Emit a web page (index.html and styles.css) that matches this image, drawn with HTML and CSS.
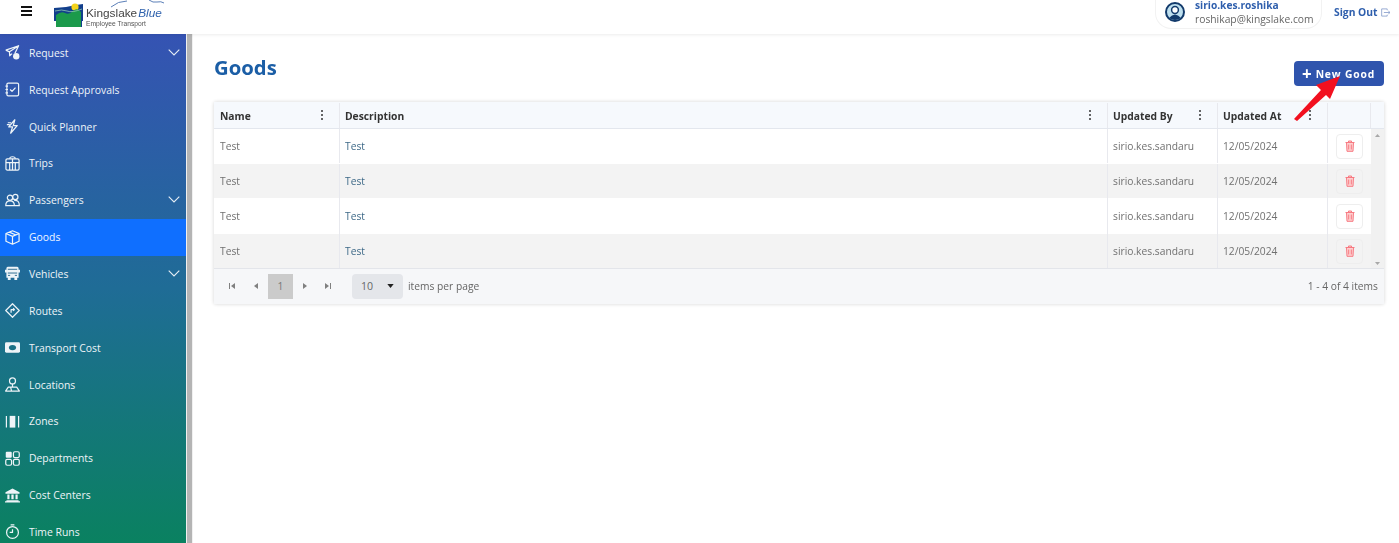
FILE: index.html
```html
<!DOCTYPE html>
<html lang="en">
<head>
<meta charset="utf-8">
<title>Goods</title>
<link rel="stylesheet" href="styles.css">
</head>
<body>
<header class="topbar">
  <div class="hamburger"><span></span><span></span><span></span></div>
  <div class="logo">
    <svg class="logo-mark" width="29" height="24" viewBox="0 0 29 24">
      <path d="M0 5 L12 4 L22 2 L29 1 V18 H28 V24 H2 V18 H0 Z" fill="#123f8c"/>
      <circle cx="21" cy="4" r="3.6" fill="#f4d31c"/>
      <path d="M2 12 Q7 8 11 10 T19 8 T27 9 V24 H2 Z" fill="#1b9a4b"/>
      <path d="M1 8 Q8 6 13 8 T28 6" stroke="#8fc7b5" stroke-width=".8" fill="none"/>
    </svg>
    <div class="logo-text">
      <div class="logo-name">Kingslake<em>Blue</em></div>
      <div class="logo-sub">Employee Transport</div>
    </div>
    <svg class="logo-wave" width="55" height="8" viewBox="0 0 55 8"><path d="M1 7 Q8 1 17 1 M39 0 Q43 3 47 2 T54 3" stroke="#5c80b8" stroke-width="1" fill="none"/></svg>
  </div>
  <div class="spacer"></div>
  <div class="user-pill">
    <svg class="avatar" width="20" height="20" viewBox="0 0 20 20">
      <circle cx="10" cy="10" r="9" fill="#bfe0ef" stroke="#123a6b" stroke-width="2"/>
      <circle cx="10" cy="8" r="3.4" fill="#fff" stroke="#123a6b" stroke-width="1.5"/>
      <path d="M4 16 Q10 9 16 16 Q10 20 4 16Z" fill="#123a6b"/>
    </svg>
    <div class="user-text">
      <div class="user-name">sirio.kes.roshika</div>
      <div class="user-mail">roshikap@kingslake.com</div>
    </div>
  </div>
  <div class="signout">Sign Out
    <svg width="10" height="9" viewBox="0 0 10 9"><path d="M6.5 2 V.7 H.7 V8.3 H6.5 V7 M3 4.5 H9.5 M7.6 2.6 L9.5 4.5 L7.6 6.4" stroke="#8aa0cc" stroke-width=".9" fill="none"/></svg>
  </div>
</header>

<div class="shell">
  <nav class="sidebar">
    <a class="nav-item">
      <svg class="nav-icon" viewBox="0 0 16 16"><path d="M.8 5.5 L14.5 .8 L10.5 9 M14.5 .8 L4.8 7.3 L.8 5.5 M4.8 7.3 L5 11.5 L7.5 9.2"/><circle class="solid" cx="12" cy="12" r="3.4"/></svg>
      <span>Request</span>
      <svg class="chev" viewBox="0 0 12 7"><path d="M.7 .7 L6 6 L11.3 .7"/></svg>
    </a>
    <a class="nav-item">
      <svg class="nav-icon" viewBox="0 0 16 16"><rect x="2" y="1.2" width="12.5" height="13.6" rx="1.5"/><path d="M.5 4.5 H3.2 M.5 8 H3.2 M.5 11.5 H3.2 M5.5 8 L7.5 10 L11.2 6"/></svg>
      <span>Request Approvals</span>
    </a>
    <a class="nav-item">
      <svg class="nav-icon" viewBox="0 0 16 16"><path d="M10.5 .8 L4 8.5 H8 L6 15.2 L13 7 H8.8 Z M3 4 H6.5 M2 6 H5"/></svg>
      <span>Quick Planner</span>
    </a>
    <a class="nav-item">
      <svg class="nav-icon" viewBox="0 0 16 16"><rect x="1" y="3" width="14" height="12" rx="1.5"/><path d="M5 3 Q5 .8 8 .8 Q11 .8 11 3 M1 7 H15 M8 3 V15 M5 7 V15 M11 7 V15"/></svg>
      <span>Trips</span>
    </a>
    <a class="nav-item">
      <svg class="nav-icon" viewBox="0 0 16 16"><circle cx="5.3" cy="5" r="2.8"/><circle cx="11" cy="4.2" r="2.8"/><path d="M.8 13.5 Q.8 8.5 5.3 8.5 Q10 8.5 10 13.5 Z M9.8 7.8 Q15.3 7.3 15.3 13.5 H10"/></svg>
      <span>Passengers</span>
      <svg class="chev" viewBox="0 0 12 7"><path d="M.7 .7 L6 6 L11.3 .7"/></svg>
    </a>
    <a class="nav-item active">
      <svg class="nav-icon" viewBox="0 0 16 16"><path d="M8 .8 L15 3.8 V12 L8 15.2 L1 12 V3.8 Z M1 3.8 L8 6.8 L15 3.8 M8 6.8 V15.2 M4.6 2.3 L11.6 5.3"/></svg>
      <span>Goods</span>
    </a>
    <a class="nav-item">
      <svg class="nav-icon" viewBox="0 0 16 16"><path class="solid" d="M3 .8 H13 Q14.5 .8 14.5 2.5 V12.5 H1.5 V2.5 Q1.5 .8 3 .8 Z M3 12.5 H6 V15 H3 Z M10 12.5 H13 V15 H10 Z M0 4 H1.5 V7 H0 Z M14.5 4 H16 V7 H14.5 Z"/><path class="cut" d="M3 3.5 H13 M3 7.5 H13 M3.2 10 H5.5 M10.5 10 H12.8"/></svg>
      <span>Vehicles</span>
      <svg class="chev" viewBox="0 0 12 7"><path d="M.7 .7 L6 6 L11.3 .7"/></svg>
    </a>
    <a class="nav-item">
      <svg class="nav-icon" viewBox="0 0 16 16"><path d="M8 .8 L15.2 8 L8 15.2 L.8 8 Z"/><path d="M6.5 10.5 V7 H10 M8.7 5.6 L10 7 L8.7 8.4"/></svg>
      <span>Routes</span>
    </a>
    <a class="nav-item">
      <svg class="nav-icon" viewBox="0 0 16 16"><path class="solid" d="M1.5 2.5 H14.5 Q16 2.5 16 4 V12 Q16 13.5 14.5 13.5 H1.5 Q0 13.5 0 12 V4 Q0 2.5 1.5 2.5 Z"/><ellipse class="hole" cx="8" cy="8" rx="3.8" ry="2.8"/></svg>
      <span>Transport Cost</span>
    </a>
    <a class="nav-item">
      <svg class="nav-icon" viewBox="0 0 16 16"><circle cx="8" cy="4.2" r="3.2"/><path d="M8 7.5 V11 M.6 15 L3.5 10.8 H12.5 L15.4 15 Z M6 10.8 L7 15"/></svg>
      <span>Locations</span>
    </a>
    <a class="nav-item">
      <svg class="nav-icon" viewBox="0 0 16 16"><path d="M1.5 2 V14.5 M14.5 2 V14.5"/><rect class="solid" x="5" y="2" width="6" height="12.5"/></svg>
      <span>Zones</span>
    </a>
    <a class="nav-item">
      <svg class="nav-icon" viewBox="0 0 16 16"><rect class="solid" x=".8" y=".8" width="6.4" height="6.4" rx="1"/><rect x="9" y=".8" width="6.2" height="6.2" rx="1.5"/><rect x=".8" y="9" width="6.2" height="6.2" rx="1.5"/><rect x="9" y="9" width="6.2" height="6.2" rx="1.5"/></svg>
      <span>Departments</span>
    </a>
    <a class="nav-item">
      <svg class="nav-icon" viewBox="0 0 16 16"><path class="solid" d="M8 .5 L15.5 4.5 V6 H.5 V4.5 Z M1.5 13 H14.5 V14 H16 V15.5 H0 V14 H1.5 Z M2.5 7 H4.8 V12 H2.5 Z M6.8 7 H9.2 V12 H6.8 Z M11.2 7 H13.5 V12 H11.2 Z"/></svg>
      <span>Cost Centers</span>
    </a>
    <a class="nav-item">
      <svg class="nav-icon" viewBox="0 0 16 16"><circle cx="8" cy="9" r="6.3"/><path d="M6 1 H10 M8 5.5 V9 H5"/></svg>
      <span>Time Runs</span>
    </a>
  </nav>
  <div class="side-scroll"></div>

  <main class="content">
    <div class="page-head">
      <h1>Goods</h1>
      <button class="new-btn"><span class="plus">+</span>New Good</button>
    </div>

    <section class="grid">
      <div class="grid-scroll">
        <div class="row head">
          <div class="cell">Name<span class="kebab"><i></i><i></i><i></i></span></div>
          <div class="cell">Description<span class="kebab"><i></i><i></i><i></i></span></div>
          <div class="cell">Updated By<span class="kebab"><i></i><i></i><i></i></span></div>
          <div class="cell">Updated At<span class="kebab"><i></i><i></i><i></i></span></div>
          <div class="cell"></div>
        </div>
        <div class="row r1 body">
          <div class="cell">Test</div><div class="cell desc">Test</div><div class="cell">sirio.kes.sandaru</div><div class="cell">12/05/2024</div>
          <div class="cell act"><span class="trash"><svg width="10" height="12" viewBox="0 0 10 12"><path d="M.5 2.5 H9.5 M3.5 2.5 V1 H6.5 V2.5 M1.5 2.5 L2 11.3 H8 L8.5 2.5 M3.7 4.5 V9.5 M6.3 4.5 V9.5"/></svg></span></div>
        </div>
        <div class="row r2 body alt">
          <div class="cell">Test</div><div class="cell desc">Test</div><div class="cell">sirio.kes.sandaru</div><div class="cell">12/05/2024</div>
          <div class="cell act"><span class="trash"><svg width="10" height="12" viewBox="0 0 10 12"><path d="M.5 2.5 H9.5 M3.5 2.5 V1 H6.5 V2.5 M1.5 2.5 L2 11.3 H8 L8.5 2.5 M3.7 4.5 V9.5 M6.3 4.5 V9.5"/></svg></span></div>
        </div>
        <div class="row r3 body">
          <div class="cell">Test</div><div class="cell desc">Test</div><div class="cell">sirio.kes.sandaru</div><div class="cell">12/05/2024</div>
          <div class="cell act"><span class="trash"><svg width="10" height="12" viewBox="0 0 10 12"><path d="M.5 2.5 H9.5 M3.5 2.5 V1 H6.5 V2.5 M1.5 2.5 L2 11.3 H8 L8.5 2.5 M3.7 4.5 V9.5 M6.3 4.5 V9.5"/></svg></span></div>
        </div>
        <div class="row r4 body alt">
          <div class="cell">Test</div><div class="cell desc">Test</div><div class="cell">sirio.kes.sandaru</div><div class="cell">12/05/2024</div>
          <div class="cell act"><span class="trash"><svg width="10" height="12" viewBox="0 0 10 12"><path d="M.5 2.5 H9.5 M3.5 2.5 V1 H6.5 V2.5 M1.5 2.5 L2 11.3 H8 L8.5 2.5 M3.7 4.5 V9.5 M6.3 4.5 V9.5"/></svg></span></div>
        </div>
        <svg class="sb-arrow up" width="5" height="3" viewBox="0 0 5 3"><path d="M0 3 L2.5 0 L5 3 Z"/></svg>
        <svg class="sb-arrow down" width="5" height="3" viewBox="0 0 5 3"><path d="M0 0 H5 L2.5 3 Z"/></svg>
      </div>
      <div class="pager">
        <svg class="pg first" viewBox="0 0 8 8"><path d="M1 1 H2 V7 H1 Z M7 1 V7 L3 4 Z"/></svg>
        <svg class="pg prev" viewBox="0 0 8 8"><path d="M6 1 V7 L2 4 Z"/></svg>
        <span class="page-num">1</span>
        <svg class="pg next" viewBox="0 0 8 8"><path d="M2 1 V7 L6 4 Z"/></svg>
        <svg class="pg last" viewBox="0 0 8 8"><path d="M7 1 H6 V7 H7 Z M1 1 V7 L5 4 Z"/></svg>
        <span class="size-select">10<svg width="7" height="4" viewBox="0 0 8 5"><path d="M0 0 H8 L4 5 Z"/></svg></span>
        <span class="per-page">items per page</span>
        <span class="count">1 - 4 of 4 items</span>
      </div>
    </section>

    <svg class="arrow" width="56" height="52" viewBox="0 0 56 52">
      <path d="M1 48 L4 50 L33 24 L37 28 L47 5 L23 14 L28 19 Z" fill="#f2101f"/>
    </svg>
  </main>
</div>
</body>
</html>
```

FILE: styles.css
```css
* { box-sizing: border-box; }
html, body { margin: 0; height: 543px; overflow: hidden; background: #fff; }
body { font-family: "Open Sans", "Noto Sans", sans-serif; font-size: 10.3px; color: #555; }

.topbar {
  height: 34px;
  display: flex;
  align-items: flex-start;
  padding-left: 21px;
  box-shadow: 0 1px 3px rgba(0,0,0,.08);
  position: relative;
  z-index: 2;
  background: #fff;
  opacity: .999;
}
.hamburger { width: 11px; margin-top: 6px; margin-right: 22px; display: flex; flex-direction: column; gap: 2px; }
.hamburger span { height: 2px; background: #111; }

.logo { position: relative; display: flex; width: 120px; padding-top: 3px; }
.logo-mark { flex: none; margin-right: 3px; }
.logo-text { padding-top: 3px; color: #444; }
.logo-name { font-family: "Liberation Sans", sans-serif; font-size: 11.8px; line-height: 14px; white-space: nowrap; }
.logo-name em { color: #2f62ad; margin-left: 1px; }
.logo-sub { font-family: "Liberation Sans", sans-serif; font-size: 6.7px; line-height: 7px; white-space: nowrap; color: #555; }
.logo-wave { position: absolute; left: 56px; top: 0; }
.spacer { flex: 1; }

.user-pill {
  width: 167px;
  height: 29px;
  flex: none;
  display: flex;
  align-items: flex-start;
  border: 1px solid #f2f2f2;
  border-top: 0;
  border-radius: 0 0 16px 16px;
  padding-left: 9px;
}
.avatar { margin-top: 2px; flex: none; }
.user-text { margin-left: 10px; }
.user-name { font-weight: 700; font-size: 10.2px; line-height: 11px; color: #2f5fad; white-space: nowrap; }
.user-mail { font-size: 10.3px; line-height: 15px; color: #666; margin-top: 1px; white-space: nowrap; }
.signout {
  margin-left: 12px;
  margin-right: 9px;
  margin-top: 5px;
  width: 56px;
  flex: none;
  font-weight: 700;
  font-size: 10.3px;
  line-height: 15px;
  color: #2f5fad;
  white-space: nowrap;
  display: flex;
  align-items: center;
  gap: 3px;
}

.shell { display: flex; height: 509px; position: relative; }
.sidebar {
  width: 186px;
  flex: none;
  height: 509px;
  overflow: hidden;
  padding-top: .5px;
  background: linear-gradient(180deg, #3553b3 0%, #1f6c96 50%, #0a8160 100%);
  opacity: .999;
}
.nav-item {
  height: 36.85px;
  display: flex;
  align-items: center;
  padding-left: 5px;
  color: #eef4f8;
  font-size: 10.4px;
  position: relative;
}
.nav-item.active { background: #0f6fff; color: #f2f7ff; }
.nav-icon {
  width: 15px;
  height: 15px;
  margin-right: 9px;
  flex: none;
  fill: none;
  stroke: #eef4f8;
  stroke-width: 1.3;
  stroke-linejoin: round;
}
.nav-icon .solid { fill: #eef4f8; stroke: none; }
.nav-icon .cut { stroke: #2a6a8f; stroke-width: 1; }
.nav-icon .hole { fill: #1b7186; stroke: none; }
.chev {
  position: absolute;
  right: 6px;
  top: 14px;
  width: 12px;
  height: 7px;
  fill: none;
  stroke: #e6eef5;
  stroke-width: 1.1;
}
.side-scroll {
  width: 7px;
  flex: none;
  background: #b4b4b4;
  border-left: 1px solid #f0f0f0;
  border-right: 1px solid #f0f0f0;
}

.content { flex: 1; padding: 0 15px 0 21px; position: relative; min-width: 0; opacity: .999; }
.page-head { height: 68px; display: flex; justify-content: space-between; align-items: flex-start; }
.page-head h1 {
  margin: 20px 0 0;
  font-size: 20.3px;
  line-height: 27px;
  font-weight: 700;
  color: #1b5ea6;
}
.new-btn {
  margin-top: 27px;
  width: 90px;
  height: 25px;
  padding: 0 1px 0 0;
  border: 0;
  border-radius: 4px;
  background: #2f54ad;
  color: #fff;
  font-family: inherit;
  font-size: 10.3px;
  font-weight: 700;
  letter-spacing: .85px;
  display: flex;
  align-items: center;
  justify-content: center;
  gap: 4px;
}
.plus { font-size: 17px; line-height: 15px; font-weight: 700; letter-spacing: 0; }

.grid {
  width: 1170px;
  height: 202px;
  box-shadow: 0 0 4px rgba(0,0,0,.18);
  background: #fff;
}
.grid-scroll { height: 166px; background: #f1f1f1; position: relative; }
.row {
  display: grid;
  grid-template-columns: 126px 768px 110px 110px 43px;
  width: 1157px;
}
.cell {
  padding-left: 5px;
  padding-right: 4px;
  display: flex;
  align-items: center;
  border-right: 1px solid #e8e9ee;
  position: relative;
  white-space: nowrap;
}
.cell:first-child { padding-left: 6px; }
.cell:last-child { border-right: 0; }
.head { height: 27px; padding-top: 1px; background: #f6f9fd; border-bottom: 1px solid #e3e7ee; width: 1170px; grid-template-columns: 126px 768px 110px 110px 43px 13px; font-weight: 700; color: #333; font-size: 10.3px; }
.head .cell:nth-child(5) { border-right: 1px solid #e8e9ee; }
.r1 { height: 35px; padding-bottom: 1px; }
.r2 { height: 34px; }
.r3 { height: 36px; }
.r4 { height: 34px; }
.body { background: #fff; color: #707070; font-size: 10.25px; }
.body.alt { background: #f3f3f3; }
.desc { color: #3f6a88; }
.act { padding: 0; justify-content: center; }
.kebab {
  position: absolute;
  right: 16px;
  top: 7px;
  display: flex;
  flex-direction: column;
  gap: 2px;
}
.kebab i { width: 2px; height: 2px; background: #333; border-radius: 50%; display: block; }
.trash {
  width: 27px;
  height: 25px;
  border: 1px solid #eeeeee;
  border-radius: 4px;
  background: inherit;
  display: flex;
  align-items: center;
  justify-content: center;
}
.trash svg { fill: #fdd0d0; stroke: #f77a82; stroke-width: 1; }
.sb-arrow { position: absolute; right: 4px; fill: #a8a8a8; }
.sb-arrow.up { top: 32px; }
.sb-arrow.down { bottom: 3px; }

.pager {
  height: 36px;
  display: flex;
  align-items: center;
  background: #f6f7f9;
  border-top: 1px solid #e3e5ea;
  padding: 0 6px 1px 14px;
  font-size: 10.25px;
  color: #666;
}
.pg { width: 8px; height: 8px; fill: #808080; flex: none; }
.prev { margin-left: 16px; }
.page-num {
  width: 25px;
  height: 25px;
  margin-left: 8px;
  background: #cbcbcb;
  display: flex;
  align-items: center;
  justify-content: center;
  color: #777;
}
.next { margin-left: 8px; }
.last { margin-left: 15px; }
.size-select {
  width: 51px;
  height: 25px;
  margin-left: 20px;
  background: #e4e6ea;
  border-radius: 4px;
  display: flex;
  align-items: center;
  justify-content: space-between;
  padding: 0 9px;
  font-size: 10.6px;
}
.size-select svg { fill: #222; }
.per-page { margin-left: 5px; }
.count { margin-left: auto; }

.arrow { position: absolute; left: 1100px; top: 37px; pointer-events: none; }
```
